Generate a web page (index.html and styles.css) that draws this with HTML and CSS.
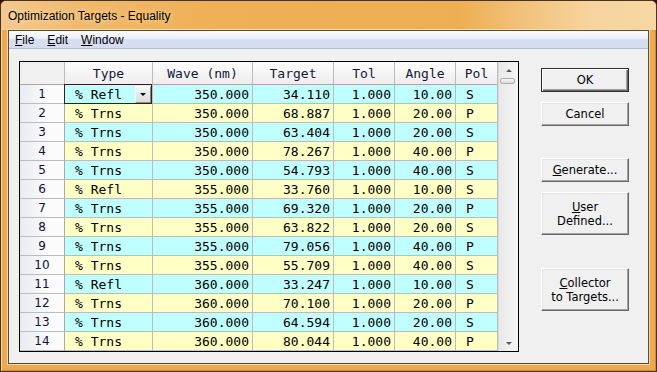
FILE: index.html
```html
<!DOCTYPE html>
<html lang="en">
<head>
    <meta charset="UTF-8">
    <title>Optimization Targets - Equality</title>
    <link rel="stylesheet" href="styles.css">
</head>
<body>
    <div class="window">
        <div class="titlebar">Optimization Targets - Equality</div>
        <div class="client">
            <div class="menubar">
                <span class="menu"><u>F</u>ile</span>
                <span class="menu"><u>E</u>dit</span>
                <span class="menu"><u>W</u>indow</span>
            </div>
            <div class="content">
                <div class="grid">
                    <div class="sheet">
                        <div class="row head">
                            <div class="cell corner"></div>
                            <div class="cell">Type</div>
                            <div class="cell">Wave (nm)</div>
                            <div class="cell">Target</div>
                            <div class="cell">Tol</div>
                            <div class="cell">Angle</div>
                            <div class="cell">Pol</div>
                        </div>
                        <div class="row cyan">
                            <div class="cell num">1</div>
                            <div class="cell txt combo">% Refl<span class="drop"></span></div>
                            <div class="cell">350.000</div>
                            <div class="cell">34.110</div>
                            <div class="cell">1.000</div>
                            <div class="cell">10.00</div>
                            <div class="cell txt">S</div>
                        </div>
                        <div class="row yellow">
                            <div class="cell num">2</div>
                            <div class="cell txt">% Trns</div>
                            <div class="cell">350.000</div>
                            <div class="cell">68.887</div>
                            <div class="cell">1.000</div>
                            <div class="cell">20.00</div>
                            <div class="cell txt">P</div>
                        </div>
                        <div class="row cyan">
                            <div class="cell num">3</div>
                            <div class="cell txt">% Trns</div>
                            <div class="cell">350.000</div>
                            <div class="cell">63.404</div>
                            <div class="cell">1.000</div>
                            <div class="cell">20.00</div>
                            <div class="cell txt">S</div>
                        </div>
                        <div class="row yellow">
                            <div class="cell num">4</div>
                            <div class="cell txt">% Trns</div>
                            <div class="cell">350.000</div>
                            <div class="cell">78.267</div>
                            <div class="cell">1.000</div>
                            <div class="cell">40.00</div>
                            <div class="cell txt">P</div>
                        </div>
                        <div class="row cyan">
                            <div class="cell num">5</div>
                            <div class="cell txt">% Trns</div>
                            <div class="cell">350.000</div>
                            <div class="cell">54.793</div>
                            <div class="cell">1.000</div>
                            <div class="cell">40.00</div>
                            <div class="cell txt">S</div>
                        </div>
                        <div class="row yellow">
                            <div class="cell num">6</div>
                            <div class="cell txt">% Refl</div>
                            <div class="cell">355.000</div>
                            <div class="cell">33.760</div>
                            <div class="cell">1.000</div>
                            <div class="cell">10.00</div>
                            <div class="cell txt">S</div>
                        </div>
                        <div class="row cyan">
                            <div class="cell num">7</div>
                            <div class="cell txt">% Trns</div>
                            <div class="cell">355.000</div>
                            <div class="cell">69.320</div>
                            <div class="cell">1.000</div>
                            <div class="cell">20.00</div>
                            <div class="cell txt">P</div>
                        </div>
                        <div class="row yellow">
                            <div class="cell num">8</div>
                            <div class="cell txt">% Trns</div>
                            <div class="cell">355.000</div>
                            <div class="cell">63.822</div>
                            <div class="cell">1.000</div>
                            <div class="cell">20.00</div>
                            <div class="cell txt">S</div>
                        </div>
                        <div class="row cyan">
                            <div class="cell num">9</div>
                            <div class="cell txt">% Trns</div>
                            <div class="cell">355.000</div>
                            <div class="cell">79.056</div>
                            <div class="cell">1.000</div>
                            <div class="cell">40.00</div>
                            <div class="cell txt">P</div>
                        </div>
                        <div class="row yellow">
                            <div class="cell num">10</div>
                            <div class="cell txt">% Trns</div>
                            <div class="cell">355.000</div>
                            <div class="cell">55.709</div>
                            <div class="cell">1.000</div>
                            <div class="cell">40.00</div>
                            <div class="cell txt">S</div>
                        </div>
                        <div class="row cyan">
                            <div class="cell num">11</div>
                            <div class="cell txt">% Refl</div>
                            <div class="cell">360.000</div>
                            <div class="cell">33.247</div>
                            <div class="cell">1.000</div>
                            <div class="cell">10.00</div>
                            <div class="cell txt">S</div>
                        </div>
                        <div class="row yellow">
                            <div class="cell num">12</div>
                            <div class="cell txt">% Trns</div>
                            <div class="cell">360.000</div>
                            <div class="cell">70.100</div>
                            <div class="cell">1.000</div>
                            <div class="cell">20.00</div>
                            <div class="cell txt">P</div>
                        </div>
                        <div class="row cyan">
                            <div class="cell num">13</div>
                            <div class="cell txt">% Trns</div>
                            <div class="cell">360.000</div>
                            <div class="cell">64.594</div>
                            <div class="cell">1.000</div>
                            <div class="cell">20.00</div>
                            <div class="cell txt">S</div>
                        </div>
                        <div class="row yellow">
                            <div class="cell num">14</div>
                            <div class="cell txt">% Trns</div>
                            <div class="cell">360.000</div>
                            <div class="cell">80.044</div>
                            <div class="cell">1.000</div>
                            <div class="cell">40.00</div>
                            <div class="cell txt">P</div>
                        </div>
                    </div>
                    <div class="scrollbar">
                        <div class="arrow-box"><span class="arrow up"></span></div>
                        <div class="thumb"></div>
                        <div class="track"></div>
                        <div class="arrow-box"><span class="arrow down"></span></div>
                    </div>
                </div>
                <div class="buttons">
                    <div class="btn default">OK</div>
                    <div class="btn gap-s">Cancel</div>
                    <div class="btn gap-l"><span><u>G</u>enerate...</span></div>
                    <div class="btn tall gap-s"><span><u>U</u>ser<br>Defined...</span></div>
                    <div class="btn tall gap-l"><span><u>C</u>ollector<br>to Targets...</span></div>
                </div>
            </div>
        </div>
    </div>
</body>
</html>
```

FILE: styles.css
```css
/* Reset */
* {
    margin: 0;
    padding: 0;
    box-sizing: border-box;
}

body {
    background-color: #3a0b0b;
    width: 657px;
    height: 372px;
    overflow: hidden;
}

/* Window frame */
.window {
    width: 657px;
    height: 372px;
    border: 1px solid #4b3419;
    border-radius: 6px 6px 0 0;
    padding: 0 7px 7px 7px;
    background: #eca950;
    display: flex;
    flex-direction: column;
    box-shadow: inset 1px 1px 0 #f7d49f, inset -1px -1px 0 #d08a35;
}

.titlebar {
    height: 29px;
    margin: 0 -7px;
    padding-left: 7px;
    display: flex;
    align-items: center;
    font-family: "Liberation Sans", Arial, sans-serif;
    font-size: 12px;
    color: #000;
    text-shadow: 0 0 6px rgba(255, 240, 215, 0.9);
    border-radius: 5px 5px 0 0;
    background: linear-gradient(to right, #f4c88f 0%, #f0ba6c 12%, #eeb158 30%, #edaf53 70%, #f2c27c 80%, #f7d49e 90%, #f7d7a3 100%);
}

.client {
    flex: 1;
    background-color: #f0f0f0;
    border: 1px solid #5c4a35;
    box-shadow: 0 0 0 1px #f6d9a8;
    display: flex;
    flex-direction: column;
}

/* Menu bar */
.menubar {
    height: 18px;
    display: flex;
    align-items: center;
    border-bottom: 1px solid #b6bdd0;
    background: linear-gradient(#fbfcfe 0%, #eaeef8 45%, #d8dff1 50%, #d5dcef 100%);
    font-family: "Liberation Sans", Arial, sans-serif;
    font-size: 12px;
    color: #000;
}

.menu {
    padding: 0 6px;
    margin-right: 1px;
}

.content {
    display: flex;
    align-items: flex-start;
    padding: 12px 0 0 10px;
}

/* Spreadsheet */
.grid {
    display: flex;
    border: 1px solid #000;
    box-shadow: inset 1px 1px 0 #404040;
}

.sheet {
    width: 478px;
}

.row {
    display: grid;
    grid-template-columns: 45px 88px 100px 81px 61px 61px 42px;
    height: 19px;
    font-family: "DejaVu Sans Mono", "Liberation Mono", monospace;
    font-size: 13px;
    color: #000;
}

.cell {
    border-right: 1px solid #bcbcbc;
    border-bottom: 1px solid #bcbcbc;
    display: flex;
    align-items: center;
    justify-content: flex-end;
    padding-right: 3px;
    white-space: nowrap;
}

.row.head {
    height: 23px;
}

.row.head .cell {
    justify-content: center;
    padding: 0;
    color: #16163a;
    border-bottom-color: #a8a8a8;
    background: linear-gradient(#fdfdfd, #ededed);
}

.row.head .corner {
    background: #f0f0f0;
}

.cell.num {
    justify-content: center;
    padding: 0;
    font-family: "DejaVu Sans", Verdana, sans-serif;
    font-size: 12px;
    color: #10103a;
    border-right-color: #a8a8a8;
    background: linear-gradient(to right, #e8ebf0, #fbfbfc 60%);
}

.cell.txt {
    justify-content: flex-start;
    padding-left: 10px;
}

.row.cyan .cell:not(.num) {
    background-color: #c0ffff;
}

.row.yellow .cell:not(.num) {
    background-color: #ffffc6;
}

/* Combo box on the active cell */
.cell.combo {
    position: relative;
    padding-right: 1px;
}

.cell.combo::after {
    content: "";
    position: absolute;
    top: -1px;
    left: -1px;
    right: 0;
    bottom: -1px;
    border: 1px solid #3b1c1c;
}

.drop {
    width: 16px;
    height: 17px;
    margin-left: auto;
    margin-top: 1px;
    border: 1px solid;
    border-color: #fff #8a8a8a #8a8a8a #fff;
    background: linear-gradient(#f6f6f6, #dcdcdc);
    display: flex;
    align-items: center;
    justify-content: center;
}

.drop::before {
    content: "";
    border-left: 3px solid transparent;
    border-right: 3px solid transparent;
    border-top: 3px solid #000;
}

/* Scroll bar */
.scrollbar {
    width: 20px;
    display: flex;
    flex-direction: column;
    border-left: 1px solid #dadada;
    background: linear-gradient(to right, #e9e9e9, #f5f5f5);
}

.arrow-box {
    height: 16px;
    display: flex;
    align-items: center;
    justify-content: center;
}

.arrow {
    border-left: 3px solid transparent;
    border-right: 3px solid transparent;
}

.arrow.up {
    border-bottom: 3px solid #5a5a5a;
}

.arrow.down {
    border-top: 3px solid #5a5a5a;
}

.thumb {
    height: 6px;
    margin: 0 3px 0 1px;
    border: 1px solid #b0b0b0;
    border-radius: 2px;
    background: linear-gradient(#f6f6f6, #dadada);
}

.track {
    flex: 1;
}

/* Buttons */
.buttons {
    display: flex;
    flex-direction: column;
    margin-left: 22px;
    padding-top: 7px;
}

.btn {
    width: 88px;
    height: 24px;
    display: flex;
    align-items: center;
    justify-content: center;
    text-align: center;
    font-family: "DejaVu Sans", Verdana, sans-serif;
    font-size: 11.5px;
    line-height: 14px;
    color: #000;
    background-color: #f0f0f0;
    border: 1px solid;
    border-color: #fff #696969 #696969 #fff;
    box-shadow: inset -1px -1px 0 #a0a0a0, inset 1px 1px 0 #e3e3e3;
}

.btn.default {
    border-color: #2e2e2e;
    box-shadow: inset 1px 1px 0 #fff, inset -1px -1px 0 #696969, inset -2px -2px 0 #a0a0a0;
}

.btn.tall {
    height: 43px;
}

.gap-s {
    margin-top: 10px;
}

.gap-l {
    margin-top: 32px;
}

.btn.tall.gap-l {
    margin-top: 33px;
}
```
